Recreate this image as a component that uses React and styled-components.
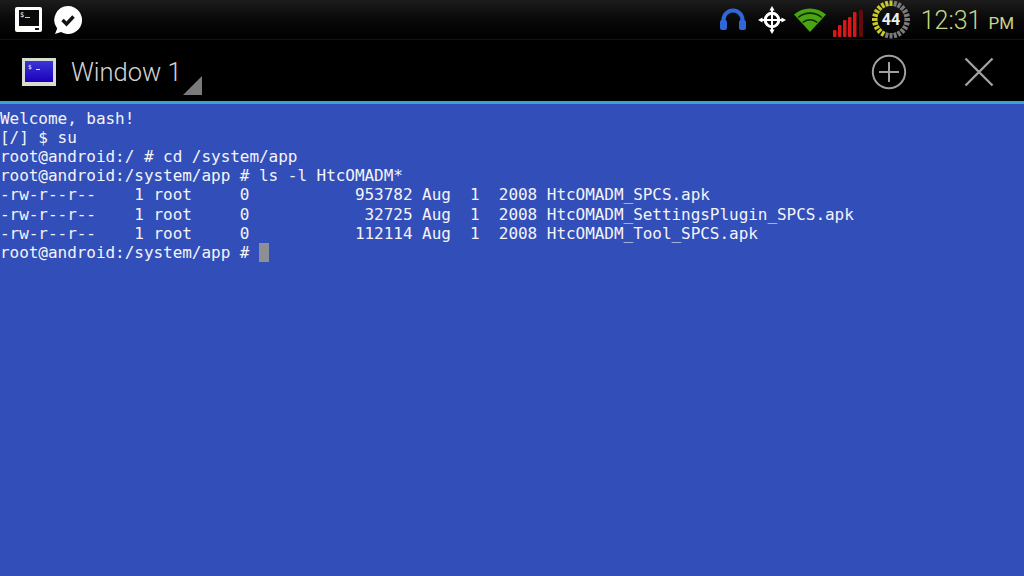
import React from "react";
import styled, {createGlobalStyle} from "styled-components";

const GlobalStyle = createGlobalStyle`
  html, body {
    margin: 0;
    padding: 0;
    background: #324eb9;
  }
`;

const Screen = styled.div`
  display: flex;
  flex-direction: column;
  width: 1024px;
  height: 576px;
  overflow: hidden;
`;

const StatusBar = styled.div`
  display: flex;
  align-items: center;
  justify-content: space-between;
  height: 40px;
  flex: none;
  box-sizing: border-box;
  background: linear-gradient(#1c1c1c, #0a0a0a 45%, #000);
  border-bottom: 1px solid #111;
`;

const IconGroup = styled.div`
  display: flex;
  align-items: center;
`;

const Clock = styled.div`
  display: flex;
  align-items: baseline;
  margin: 2px 10px 0 10px;
  font-family: Roboto, sans-serif;
  font-weight: 300;
  font-size: 25px;
  color: #c8d688;
`;

const Meridiem = styled.span`
  margin-left: 7px;
  font-size: 17px;
  font-weight: 400;
`;

const ActionBar = styled.div`
  display: flex;
  align-items: center;
  height: 64px;
  flex: none;
  box-sizing: border-box;
  padding-top: 3px;
  background: #000;
  border-bottom: 3px solid #35a3d6;
`;

const WindowTab = styled.div`
  display: flex;
  align-items: center;
  flex: 1;
  padding-left: 22px;
`;

const WindowTitle = styled.div`
  margin-left: 15px;
  font-family: Roboto, sans-serif;
  font-weight: 300;
  font-size: 25.5px;
  color: #d4d4d4;
`;

const Terminal = styled.pre`
  flex: 1;
  margin: 0;
  padding-top: 4.85px;
  background: #324eb9;
  color: #f4f4f8;
  font-family: "DejaVu Sans Mono", "Liberation Mono", monospace;
  font-size: 16px;
  line-height: 19.14px;
  letter-spacing: -0.04px;
`;

const Cursor = styled.span`
  display: inline-block;
  width: 10px;
  height: 19px;
  vertical-align: top;
  background: #8e8e96;
`;

const Icon = styled.svg`
  flex: none;
  margin-left: ${(props) => props.$left || 0}px;
  margin-right: ${(props) => props.$right || 0}px;
  margin-top: ${(props) => props.$top || 0}px;
`;

const TerminalIcon = () => (
    <Icon $left={15} width="28" height="26" viewBox="0 0 28 26">
        <rect x="0" y="0" width="27" height="25" rx="2" fill="#fff"/>
        <rect x="4" y="3" width="20" height="16" fill="#0a0a0a"/>
        <rect x="20" y="21" width="4" height="2" fill="#111"/>
        <text x="5" y="10" fontSize="7" fill="#fff" fontFamily="DejaVu Sans Mono">$</text>
        <rect x="10" y="10" width="5" height="1" fill="#ccc"/>
    </Icon>
);

const CheckBubble = () => (
    <Icon $left={10} width="30" height="30" viewBox="0 0 30 30">
        <path d="M15 1a14 14 0 1 1-7 26.1 L2 29 L4.2 23.5 A14 14 0 0 1 15 1z" fill="#fff"/>
        <path d="M9.5 15l4 4 7-7.5" fill="none" stroke="#111" strokeWidth="3.4"/>
    </Icon>
);

const Headset = () => (
    <Icon width="28" height="24" viewBox="0 0 28 24">
        <path d="M4.5 14V12a9.5 9.5 0 0 1 19 0v2" fill="none" stroke="#2f66d8" strokeWidth="4"/>
        <rect x="1" y="12" width="7" height="10" rx="2" fill="#2f66d8"/>
        <rect x="20" y="12" width="7" height="10" rx="2" fill="#2f66d8"/>
    </Icon>
);

const Crosshair = () => (
    <Icon $left={10} width="30" height="30" viewBox="0 0 30 30">
        <circle cx="15" cy="15" r="6.8" fill="none" stroke="#fff" strokeWidth="3"/>
        <path d="M15 5v20M5 15h20" stroke="#fff" strokeWidth="2"/>
        <path d="M15 1l2.6 4.5h-5.2zM15 29l2.6-4.5h-5.2zM1 15l4.5-2.6v5.2zM29 15l-4.5-2.6v5.2z" fill="#fff"/>
    </Icon>
);

const Wifi = () => (
    <Icon $left={6} width="34" height="28" viewBox="0 0 34 28">
        <path d="M17 26L1 8.5A24 24 0 0 1 33 8.5z" fill="#4aa512"/>
        <path d="M5.2 11.5A18 18 0 0 1 28.8 11.5M9.6 16.5A11.5 11.5 0 0 1 24.4 16.5" fill="none" stroke="#0f2a05" strokeWidth="1.6"/>
    </Icon>
);

const signalBars = [
    {x: 0, top: 28, color: "#d81818"},
    {x: 5, top: 23, color: "#d81818"},
    {x: 10, top: 18, color: "#d81818"},
    {x: 15, top: 15, color: "#d81818"},
    {x: 20, top: 10, color: "#d81818"},
    {x: 26, top: 8, color: "#5e0c0c"},
];

const Signal = () => (
    <Icon $left={6} width="32" height="36" viewBox="0 0 32 36">
        {signalBars.map((bar) => (
            <rect key={bar.x} x={bar.x} y={bar.top} width={bar.x === 26 ? 4 : 3.5} height={35 - bar.top} rx="1" fill={bar.color}/>
        ))}
    </Icon>
);

const Battery = () => (
    <Icon $left={6} width="40" height="40" viewBox="0 0 40 40">
        {new Array(24).fill(0).map((_, i) => {
            const angle = (i * 15 * Math.PI) / 180;
            const lit = i >= 14 || i === 0;
            return (
                <line
                    key={i}
                    x1={20 + Math.sin(angle) * 13.5}
                    y1={19.5 - Math.cos(angle) * 13.5}
                    x2={20 + Math.sin(angle) * 19}
                    y2={19.5 - Math.cos(angle) * 19}
                    stroke={lit ? "#c9c92e" : "#7c7c7c"}
                    strokeWidth="3"
                />
            );
        })}
        <text x="20" y="25" textAnchor="middle" fontSize="16" fontWeight="700" fill="#eeeeee" fontFamily="Roboto">44</text>
    </Icon>
);

const WindowIcon = () => (
    <Icon width="34" height="28" viewBox="0 0 34 28">
        <defs>
            <linearGradient id="screenFill" x1="0" y1="0" x2="0" y2="1">
                <stop offset="0" stopColor="#3a36d8"/>
                <stop offset="1" stopColor="#1c00b8"/>
            </linearGradient>
        </defs>
        <rect width="34" height="28" fill="#d8dcd2"/>
        <rect x="3" y="3" width="28" height="21" fill="url(#screenFill)"/>
        <text x="6" y="11" fontSize="6" fill="#fff" fontFamily="DejaVu Sans Mono">$</text>
        <rect x="14" y="11" width="4" height="1" fill="#ddd"/>
    </Icon>
);

const MenuCorner = () => (
    <Icon $left={1} $top={27} width="19" height="19" viewBox="0 0 19 19">
        <path d="M0 19L19 0v19z" fill="#7a7a7a"/>
    </Icon>
);

const AddWindow = () => (
    <Icon width="36" height="36" viewBox="0 0 36 36">
        <circle cx="18" cy="18" r="16.2" fill="none" stroke="#a0a0a0" strokeWidth="2"/>
        <path d="M18 8v20M8 18h20" stroke="#a0a0a0" strokeWidth="2"/>
    </Icon>
);

const CloseWindow = () => (
    <Icon $left={57} $right={30} width="30" height="30" viewBox="0 0 30 30">
        <path d="M1.5 1.5l27 27M28.5 1.5l-27 27" stroke="#a0a0a0" strokeWidth="2.4"/>
    </Icon>
);

const output = `Welcome, bash!
[/] $ su
root@android:/ # cd /system/app
root@android:/system/app # ls -l HtcOMADM*
-rw-r--r--    1 root     0           953782 Aug  1  2008 HtcOMADM_SPCS.apk
-rw-r--r--    1 root     0            32725 Aug  1  2008 HtcOMADM_SettingsPlugin_SPCS.apk
-rw-r--r--    1 root     0           112114 Aug  1  2008 HtcOMADM_Tool_SPCS.apk
root@android:/system/app # `;

const App = () => {
    return (
        <Screen>
            <GlobalStyle/>
            <StatusBar>
                <IconGroup>
                    <TerminalIcon/>
                    <CheckBubble/>
                </IconGroup>
                <IconGroup>
                    <Headset/>
                    <Crosshair/>
                    <Wifi/>
                    <Signal/>
                    <Battery/>
                    <Clock>12:31<Meridiem>PM</Meridiem></Clock>
                </IconGroup>
            </StatusBar>
            <ActionBar>
                <WindowTab>
                    <WindowIcon/>
                    <WindowTitle>Window 1</WindowTitle>
                    <MenuCorner/>
                </WindowTab>
                <AddWindow/>
                <CloseWindow/>
            </ActionBar>
            <Terminal>{output}<Cursor/></Terminal>
        </Screen>
    );
};

export default App;
